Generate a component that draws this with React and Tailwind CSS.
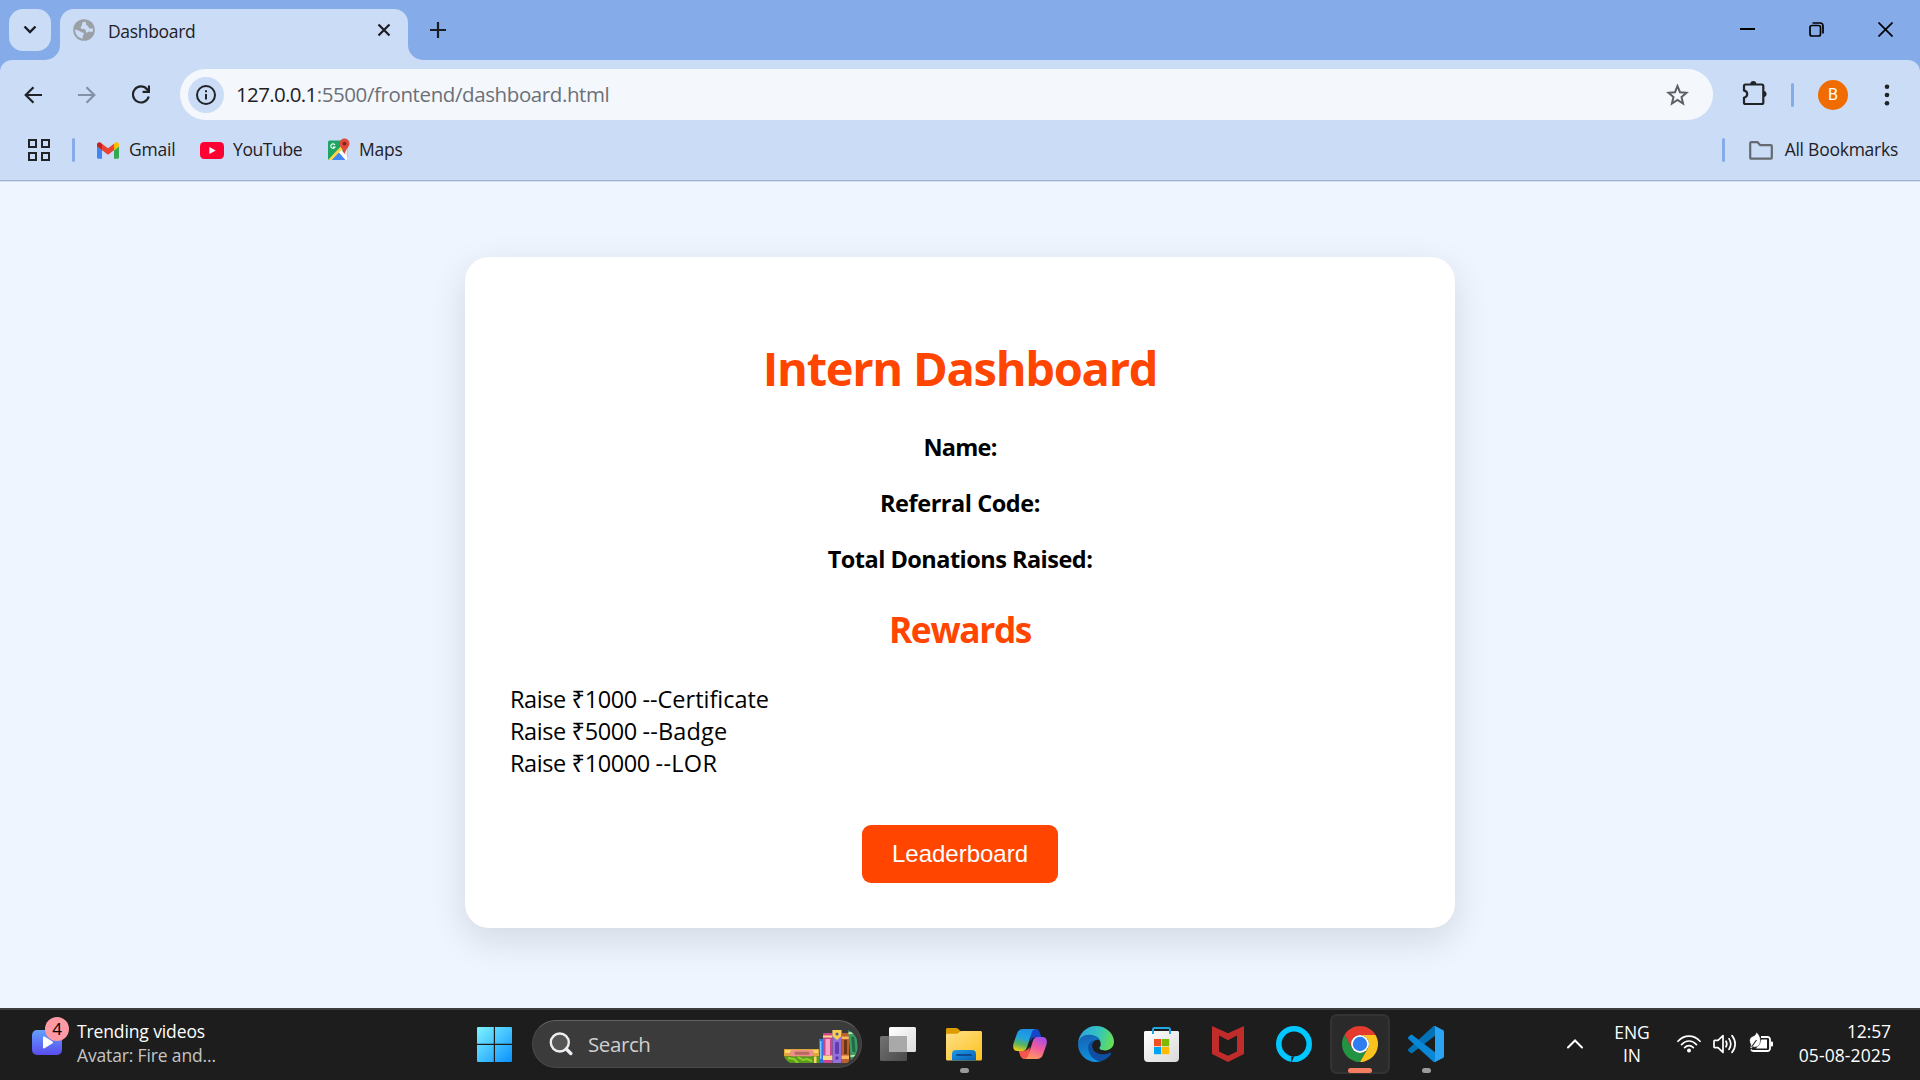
import React from 'react';

/* ---------- browser icons ---------- */

const Globe = () => (
  <svg width="22" height="22" viewBox="0 0 22 22">
    <circle cx="11" cy="11" r="10.8" fill="#9aa0a6" />
    <path d="M12.5 2.6C9.5 3 8.6 4.4 8.9 5.8c.3 1.3-1.4 1.5-1.2 3 .1 1 1 1.2 2.3 1.1 1.6-.1 2.6.4 2.8 1.6.2 1-.3 1.7.5 2.1 1 .4 1.4-1 2.7-1.1 1.3 0 2.6.7 3.5.2.5-.9.5-2.7.2-3.7-1 .6-2.4.8-3.4.2-1-.7-.6-1.9-1.7-2.4-.9-.4-1.700-.8-1.500-2.100z" fill="#cbdcf6" />
    <path d="M2 10.600c1 .200 4.400 1.300 5.600 2.200 1.200 1 2.700.500 3.200 1.700.500 1.300-.900 1.600-1.100 2.900-.1 1 .1 1.700.2 2.300C5.500 19.200 2 15.500 2 10.600z" fill="#cbdcf6" />
  </svg>
);

const Gmail = () => (
  <svg width="22" height="17" viewBox="52 42 88 66">
    <path fill="#4285f4" d="M58 108h14V74L52 59v43c0 3.320 2.690 6 6 6" />
    <path fill="#34a853" d="M120 108h14c3.320 0 6-2.690 6-6V59l-20 15" />
    <path fill="#fbbc04" d="M120 48v26l20-15v-8c0-7.420-8.470-11.650-14.400-7.200" />
    <path fill="#ea4335" d="M72 74V48l24 18 24-18v26L96 92" />
    <path fill="#c5221f" d="M52 51v8l20 15V48l-5.600-4.200c-5.940-4.450-14.400-.220-14.400 7.200" />
  </svg>
);

const YouTube = () => (
  <svg width="24" height="17" viewBox="0 0 24 17">
    <rect width="24" height="17" rx="4.200" fill="#ff0033" />
    <path d="M9.400 5v7l6.300-3.500z" fill="#fff" />
  </svg>
);

const Maps = () => (
  <svg width="22" height="23" viewBox="0 0 22 23">
    <clipPath id="mapTile"><rect x="0" y="2.500" width="19.500" height="19.500" rx="1.500" /></clipPath>
    <g clipPath="url(#mapTile)">
      <rect y="2" width="20" height="21" fill="#1fa463" />
      <path d="M20 8v14H12z" fill="#e8eaed" />
      <path d="M0 22L16 5l2 4L3 23z" fill="#fdd649" />
      <path d="M3 23l8-8.500L18.500 23z" fill="#4285f4" />
      <path d="M11 14.500l2.500-2.600L20 20v3h-1.500z" fill="#fff" />
    </g>
    <path d="M6.900 6.900a2.200 2.200 0 1 0 .1 2.200H4.900" fill="none" stroke="#fff" strokeWidth="1.100" />
    <path d="M16.500 0.500a5 5 0 0 1 5 5c0 3.500-4 5.500-5 11-1-5.500-5-7.500-5-11a5 5 0 0 1 5-5z" fill="#dd4b3e" />
    <circle cx="16.500" cy="5.600" r="1.900" fill="#7a241c" />
  </svg>
);

const Puzzle = () => (
  <svg width="26" height="26" viewBox="0 0 26 26" fill="none">
    <path d="M3.500 4.500h16.300c.900 0 1.500.600 1.500 1.500v16.500c0 .900-.600 1.500-1.500 1.500H3.500c-.900 0-1.500-.600-1.500-1.500v-4.700c2.200-.600 3.200-2 3.200-3.700S4.200 11 2 10.400V6c0-.900.600-1.500 1.500-1.500z" stroke="#202327" strokeWidth="2.200" />
    <path d="M8.300 4a3 3 0 0 1 6 0z" fill="#202327" />
    <path d="M21.500 11a3 3 0 0 1 0 6z" fill="#202327" />
  </svg>
);

const Divider = ({ className = '' }) => (
  <div className={`h-6 w-[3px] rounded-full bg-[#85ace9] ${className}`} />
);

/* ---------- taskbar icons ---------- */

const Start = () => (
  <svg width="35" height="35" viewBox="0 0 35 35">
    <defs>
      <linearGradient id="winG" x1="0" y1="0" x2="35" y2="35" gradientUnits="userSpaceOnUse">
        <stop stopColor="#7df3ff" /><stop offset=".5" stopColor="#45c3ff" /><stop offset="1" stopColor="#0a90fb" />
      </linearGradient>
    </defs>
    <path fill="url(#winG)" d="M1 0h15.800v16.800H0V1a1 1 0 0 1 1-1zM18 0h16a1 1 0 0 1 1 1v15.800H18zM0 18h16.800v17H1a1 1 0 0 1-1-1zM18 18h17v16a1 1 0 0 1-1 1H18z" />
  </svg>
);

const Books = () => (
  <svg width="75" height="33" viewBox="0 0 75 33">
    <clipPath id="pillEnd"><path d="M0 19h30V0h34c6 3 10 8 10 15s-4 14-11 18H6C3 31 1 29 0 26z" /></clipPath>
    <g clipPath="url(#pillEnd)">
      <rect x="0" y="19" width="35" height="7.500" fill="#dfa63a" />
      <rect x="1" y="20" width="33" height="3" fill="#fbd46b" />
      <rect x="6" y="20" width="24" height="6.500" rx="3" fill="#f08f8a" />
      <rect x="10.500" y="21.700" width="15" height="3" rx="1.500" fill="#b5695f" />
      <rect x="0" y="26.500" width="35" height="6.500" fill="#5c9c1d" />
      <path d="M4 28l6 1 4 4M14 27l5 3 4-1 5 2" stroke="#8ed12f" strokeWidth="2" fill="none" />
      <rect x="30" y="26.500" width="2.500" height="6.500" fill="#fbd46b" />
      <rect x="35" y="9" width="4" height="24" fill="#2f74dc" />
      <rect x="36" y="11" width="1.500" height="18" fill="#7fc0ff" />
      <rect x="39" y="3" width="9.500" height="30" rx="1" fill="#c9478a" />
      <rect x="41.500" y="9" width="4.500" height="16" fill="#f7a5cb" />
      <path d="M39 5.500h9.500v2H39zM39 25.500h9.500v4.500H39z" fill="#fbd98a" />
      <rect x="48.500" y="0" width="9" height="33" rx="1" fill="#9370dc" />
      <path d="M48.500 0h9v6L53 10l-4.500-4z" fill="#f8cf4f" />
      <rect x="51" y="12" width="4" height="12" rx="1" fill="#5f3fae" />
      <circle cx="53" cy="4" r="1.600" fill="#5b5a8c" />
      <circle cx="53" cy="28" r="1.700" fill="#5a3aa6" />
      <rect x="57.500" y="3" width="7.500" height="30" rx="1" fill="#b9602c" />
      <rect x="60" y="10" width="3" height="14" fill="#6f3413" />
      <path d="M57.500 6.500H65v2.500h-7.500zM57.500 25.500H65V29h-7.500z" fill="#fbb55f" />
      <g transform="rotate(-5 69 16)">
        <rect x="65.500" y="-1" width="8" height="32" rx="1" fill="#3d9a68" />
        <rect x="68" y="7" width="3" height="15" fill="#1f6b44" />
        <path d="M65.500 2h8v1.800h-8zM65.500 25h8v1.800h-8z" fill="#bfe3a0" />
      </g>
    </g>
  </svg>
);

const TaskView = () => (
  <svg width="36" height="36" viewBox="0 0 36 36">
    <defs>
      <linearGradient id="tvF" x1="0" y1="0" x2="1" y2="1"><stop stopColor="#fff" /><stop offset="1" stopColor="#dcdcdc" /></linearGradient>
      <linearGradient id="tvB" x1="0" y1="0" x2="1" y2="1"><stop stopColor="#737373" /><stop offset="1" stopColor="#4b4b4b" /></linearGradient>
    </defs>
    <rect x="0" y="10" width="27" height="25" rx="1.500" fill="url(#tvB)" />
    <rect x="9" y="1" width="27" height="25" rx="1.500" fill="url(#tvF)" />
    <path d="M9 10h18v16H10.500A1.500 1.500 0 0 1 9 24.500z" fill="#a9a9a9" />
  </svg>
);

const Explorer = () => (
  <svg width="36" height="36" viewBox="0 0 36 36">
    <defs>
      <linearGradient id="exY" x1="0" y1="0" x2="1" y2="1"><stop stopColor="#ffe08a" /><stop offset="1" stopColor="#fcc21f" /></linearGradient>
      <linearGradient id="exB" x1="0" y1="0" x2="1" y2="1"><stop stopColor="#1f9be6" /><stop offset="1" stopColor="#0a5fb4" /></linearGradient>
    </defs>
    <path d="M0 3.500C0 2.500.7 2 1.500 2H10c1 0 1.700.3 2.300.9L15 5.500V12H0z" fill="#dd9c00" />
    <path d="M0 9c0-.8.600-1.300 1.400-1.300h9.300c.8 0 1.400-.3 2-.9l1.500-1.200c.4-.4.900-.6 1.500-.6H34.500c.9 0 1.500.6 1.500 1.500v26.500c0 .9-.6 1.500-1.500 1.500h-33C.6 34.500 0 33.900 0 33z" fill="url(#exY)" />
    <path d="M6 34.500V28a4 4 0 0 1 4-4h16a4 4 0 0 1 4 4v6.500z" fill="url(#exB)" />
    <path d="M11 29h14" stroke="#0b4a91" strokeWidth="1.800" strokeLinecap="round" />
  </svg>
);

const Copilot = () => (
  <svg width="34" height="30" viewBox="0 0 34 30">
    <defs>
      <linearGradient id="cpL" x1="12" y1="0" x2="6" y2="22" gradientUnits="userSpaceOnUse">
        <stop stopColor="#1b8fe8" /><stop offset=".4" stopColor="#22a3e0" /><stop offset=".7" stopColor="#57b560" /><stop offset="1" stopColor="#f2cd17" />
      </linearGradient>
      <linearGradient id="cpR" x1="27" y1="8" x2="18" y2="30" gradientUnits="userSpaceOnUse">
        <stop stopColor="#a64fe8" /><stop offset=".45" stopColor="#ee5aa0" /><stop offset="1" stopColor="#ff9a5c" />
      </linearGradient>
    </defs>
    <path d="M17 0h5.500c2.500 0 3.700 1.700 4.500 4l1.400 4.300H23c-3 0-4.500 1.500-5.500 4.200z" fill="#1746c8" />
    <path d="M17 30h-5.500c-2.500 0-3.700-1.700-4.500-4l-1.400-4.300H11c3 0 4.500-1.500 5.500-4.200z" fill="#f4564e" />
    <path d="M10 0h13c-2.500 0-3.700 1.800-4.500 4.300l-4.300 13.400c-.9 2.700-2.200 4.300-4.700 4.300H4.500C.5 22-.5 18.500.5 14.500L4 4.500C5 1.600 7 0 10 0z" fill="url(#cpL)" />
    <path d="M24 30H11c2.500 0 3.700-1.800 4.500-4.300l4.300-13.400c.9-2.700 2.200-4.300 4.700-4.300h5c4 0 5 3.500 4 7.500l-3.500 10C29 28.400 27 30 24 30z" fill="url(#cpR)" />
  </svg>
);

const Edge = () => (
  <svg width="36" height="36" viewBox="0 0 36 36">
    <defs>
      <linearGradient id="edT" x1="3" y1="8" x2="35" y2="18" gradientUnits="userSpaceOnUse">
        <stop stopColor="#2fa8df" /><stop offset=".5" stopColor="#34c5bd" /><stop offset="1" stopColor="#69e04f" />
      </linearGradient>
      <linearGradient id="edB" x1="8" y1="9" x2="14" y2="36" gradientUnits="userSpaceOnUse">
        <stop stopColor="#1464b4" /><stop offset="1" stopColor="#1193e0" />
      </linearGradient>
    </defs>
    <path d="M0 18C.5 7.500 8.500 0 18 0c10.500 0 18 8 18 15.500 0 5.500-4 9-9 9-3.800 0-6.200-1.400-5.500-2.900 1-1 1.300-2.300 1.200-4C22.400 12.500 17 9 11 9 5 9 1 13 0 18z" fill="url(#edT)" />
    <path d="M0 18c1-6 5.500-9.200 11-9.200 5.500 0 9.500 2.200 11.200 5.700-4-2-8.200.5-8.200 5.500 0 6 5.500 11 13.500 11.500C25 34.500 21.500 36 18 36 8 36 0 28 0 18z" fill="url(#edB)" />
    <path d="M10.200 22c.3 6.500 5 12 11.800 13.500 5-1 9-4.200 11-7.500.5-1-.4-1.700-1.200-1.300C24 30.300 14.500 27.500 14 20c0-2.500 1-4.500 2.800-5.700-4 .3-6.800 3.700-6.600 7.700z" fill="#0f4fa3" />
  </svg>
);

const Store = () => (
  <svg width="36" height="36" viewBox="0 0 36 36">
    <defs><linearGradient id="stW" x1="0" y1="0" x2="1" y2="1"><stop stopColor="#fff" /><stop offset="1" stopColor="#d9d9d9" /></linearGradient></defs>
    <path d="M0 6.500C0 5.600.6 5 1.500 5h32c.9 0 1.500.6 1.500 1.500V32a4 4 0 0 1-4 4H4a4 4 0 0 1-4-4z" fill="url(#stW)" />
    <path d="M9 8V3.500C9 2.600 9.600 2 10.500 2h14c.9 0 1.500.6 1.500 1.500V8" fill="none" stroke="#21a7e6" strokeWidth="2" />
    <rect x="10" y="13" width="7.200" height="7.200" fill="#f25022" />
    <rect x="18" y="13" width="7.200" height="7.200" fill="#7fba00" />
    <rect x="10" y="21" width="7.200" height="7.200" fill="#00a4ef" />
    <rect x="18" y="21" width="7.200" height="7.200" fill="#ffb900" />
  </svg>
);

const McAfee = () => (
  <svg width="32" height="36" viewBox="0 0 32 36">
    <path fillRule="evenodd" fill="#c02c2a" d="M0 0l16 7.300L32 0v28l-16 8-16-8zM7 9.500V25.500l9 4.200 9-4.200V9.500l-9 4.700z" />
  </svg>
);

const Alexa = () => (
  <svg width="36" height="36" viewBox="0 0 36 36">
    <circle cx="18" cy="18" r="15.200" fill="none" stroke="#00c7ff" strokeWidth="5.600" />
    <path d="M15.300 30.500h3c-1.200 1.500-1.800 3.500-2 5.700h-1z" fill="#1d1d1d" />
    <path d="M16.300 36c.4-2.200 1.300-4 3-5.500l3-.4.500 5.200c-2 .6-4.500.8-6.500.7z" fill="#00c7ff" />
  </svg>
);

const Chrome = () => (
  <svg width="36" height="36" viewBox="0 0 48 48">
    <path fill="#e33b2e" d="M24 12h20.780A24 24 0 0 0 3.220 12L13.600 30A12 12 0 0 1 24 12z" />
    <path fill="#229342" d="M13.600 30L3.220 12A24 24 0 0 0 24 48l10.390-18A12 12 0 0 1 13.600 30z" />
    <path fill="#fcc31e" d="M34.390 30L24 48a24 24 0 0 0 20.780-36H24a12 12 0 0 1 10.390 18z" />
    <circle cx="24" cy="24" r="12" fill="#fff" />
    <circle cx="24" cy="24" r="9.600" fill="#2f7df0" />
  </svg>
);

const VSCode = () => (
  <svg width="36" height="36" viewBox="0 0 100 100">
    <path fill="#0072b8" d="M96.460 10.800 75.860.88C73.470-.27 70.620.21 68.750 2.080L1.300 63.580c-1.820 1.660-1.810 4.510.01 6.160l5.510 5.010c1.480 1.350 3.710 1.450 5.320.23L93.360 13.360C96.090 11.300 100 13.240 100 16.670v-.24c0-2.400-1.380-4.590-3.540-5.630Z" />
    <path fill="#0a86d6" d="M96.460 89.200 75.860 99.120c-2.390 1.150-5.240.67-7.110-1.200L1.300 36.420c-1.820-1.660-1.810-4.510.01-6.160l5.510-5.010c1.480-1.350 3.720-1.450 5.320-.23l81.220 61.620c2.730 2.070 6.640.13 6.640-3.300v.24c0 2.410-1.380 4.590-3.540 5.630Z" />
    <path fill="#2aa3f2" d="M75.860 99.130c-2.390 1.150-5.240.66-7.110-1.200 2.310 2.310 6.250.67 6.250-2.590V4.660c0-3.260-3.940-4.900-6.250-2.590 1.870-1.870 4.720-2.360 7.110-1.210l20.600 9.910c2.160 1.040 3.540 3.230 3.540 5.630v67.190c0 2.400-1.380 4.590-3.540 5.630Z" />
  </svg>
);

const Wifi = () => (
  <svg width="24" height="18" viewBox="0 0 24 18" fill="none" stroke="#fff" strokeWidth="1.700" strokeLinecap="round">
    <path d="M1 6.300C4 3 7.800 1.200 12 1.200S20 3 23 6.300" />
    <path d="M4.500 9.600C6.600 7.300 9.100 6 12 6s5.400 1.300 7.500 3.600" />
    <path d="M7.600 12.600c1.300-1.300 2.700-2 4.400-2s3.100.7 4.400 2" />
    <circle cx="12" cy="15.500" r="2" fill="#fff" stroke="none" />
  </svg>
);

const Speaker = () => (
  <svg width="24" height="20" viewBox="0 0 24 20" fill="none" stroke="#fff" strokeWidth="1.700" strokeLinecap="round" strokeLinejoin="round">
    <path d="M1 7.200c0-.5.300-.8.800-.8H5l5-4.800v16.800l-5-4.800H1.800c-.5 0-.8-.3-.8-.8z" />
    <path d="M13 7.200c1 1.700 1 3.900 0 5.600" />
    <path d="M16 4.600c2.200 3.300 2.200 7.500 0 10.800" />
    <path d="M19 1.600c4.200 5.100 4.200 11.700 0 16.800" />
  </svg>
);

const Battery = () => (
  <svg width="24" height="22" viewBox="0 0 24 22">
    <path d="M12 5h6.500a2.500 2.500 0 0 1 2.500 2.500v9a2.500 2.500 0 0 1-2.500 2.500H4.500A2.500 2.500 0 0 1 2 17.500" fill="none" stroke="#fff" strokeWidth="1.800" />
    <path d="M12.500 7.500H18v9H7z" fill="#fff" />
    <rect x="21.500" y="9.500" width="2.500" height="5" rx="1" fill="#fff" />
    <path d="M7.500 0c2 2.500 4 4.500 4 8.500 0 3.500-2 6-4.500 6.500-1.500.3-2.500 0-3-.2L2.500 16.500 1 15.500 2 13C-.5 9 .5 5 4.500 4 6 3.600 7 2 7.500 0z" fill="#fff" stroke="#1d1d1d" strokeWidth=".5" />
    <path d="M2.500 15L7.500 8" stroke="#1d1d1d" strokeWidth="1.100" />
  </svg>
);

const apps = [
  { name: 'taskview', Icon: TaskView },
  { name: 'explorer', Icon: Explorer, open: true },
  { name: 'copilot', Icon: Copilot },
  { name: 'edge', Icon: Edge },
  { name: 'store', Icon: Store },
  { name: 'mcafee', Icon: McAfee },
  { name: 'alexa', Icon: Alexa },
  { name: 'chrome', Icon: Chrome, active: true },
  { name: 'vscode', Icon: VSCode, open: true },
];

/* ---------- sections ---------- */

function TabStrip() {
  return (
    <div className="flex h-[60px] items-stretch">
      <div className="ml-[9px] mt-[9px] flex h-[42px] w-[42px] items-center justify-center rounded-[14px] bg-[#cbdcf6]">
        <svg width="14" height="10" viewBox="0 0 14 10" fill="none" stroke="#1b1d21" strokeWidth="2.400">
          <path d="M1.500 1.500L7 7l5.500-5.500" />
        </svg>
      </div>
      <svg className="-ml-[6px] self-end" width="15" height="15" viewBox="0 0 15 15"><path d="M15 0v15H0A15 15 0 0 0 15 0z" fill="#cbdcf6" /></svg>
      <div className="mt-[9px] flex w-[348px] items-start rounded-t-[14px] bg-[#cbdcf6] pl-[13px] pr-[17px]">
        <div className="mt-[10px]"><Globe /></div>
        <span className="ml-[13px] mt-[10px] grow text-[17.5px] leading-6 tracking-[-0.33px] text-[#1f2125]">Dashboard</span>
        <svg className="mt-[14px]" width="14" height="14" viewBox="0 0 14 14" stroke="#1b1d21" strokeWidth="2.200"><path d="M1.500 1.500l11 11M12.500 1.500l-11 11" /></svg>
      </div>
      <svg className="self-end" width="15" height="15" viewBox="0 0 15 15"><path d="M0 0v15h15A15 15 0 0 1 0 0z" fill="#cbdcf6" /></svg>
      <svg className="ml-[7px] mt-[22px]" width="16" height="16" viewBox="0 0 16 16" stroke="#1b1d21" strokeWidth="2.200"><path d="M8 0v16M0 8h16" /></svg>
      <div className="ml-auto mr-[27px] mt-[22px] flex h-4 items-start gap-[54px]">
        <svg width="15" height="15" viewBox="0 0 15 15"><path d="M0 7h15" stroke="#000" strokeWidth="2" /></svg>
        <svg width="15" height="15" viewBox="0 0 15 15" fill="none" stroke="#000" strokeWidth="1.700">
          <rect x="1" y="3.500" width="10.500" height="10.500" rx="2" />
          <path d="M3.500 1H11a3 3 0 0 1 3 3v7.500" />
        </svg>
        <svg width="15" height="15" viewBox="0 0 15 15" stroke="#000" strokeWidth="1.700"><path d="M.5.5l14 14M14.500.5l-14 14" /></svg>
      </div>
    </div>
  );
}

function Toolbar() {
  return (
    <div className="flex h-[69px] items-center">
      <svg className="ml-[24px]" width="18" height="18" viewBox="0 0 18 18" fill="none" stroke="#202327" strokeWidth="2.200"><path d="M18 9H2M9.500 1.200L1.700 9l7.800 7.800" /></svg>
      <svg className="ml-[36px]" width="18" height="18" viewBox="0 0 18 18" fill="none" stroke="#8490a5" strokeWidth="2.200"><path d="M0 9h16M8.500 1.200L16.300 9l-7.800 7.800" /></svg>
      <svg className="ml-[36px]" width="18" height="19" viewBox="0 0 18 19" fill="none" stroke="#202327" strokeWidth="2.200">
        <path d="M16.700 11.500A8 8 0 1 1 15 4.200l1.800 2" />
        <path d="M17 .5v6.400h-6.400" />
      </svg>
      <div className="ml-[30px] flex h-[51px] w-[1533px] items-center rounded-full bg-[#f4f8fd] pl-[8px] pr-[24px]">
        <div className="flex h-9 w-9 items-center justify-center rounded-full bg-[#cbdcf6]">
          <svg width="20" height="20" viewBox="0 0 20 20" fill="none" stroke="#202327"><circle cx="10" cy="10" r="9" strokeWidth="2" /><path d="M10 9v5.500M10 5.300v2" strokeWidth="2" /></svg>
        </div>
        <span className="-mt-px ml-[12px] grow text-[20.5px] leading-8 text-[#1f2125]">
          <span className="tracking-[-0.65px]">127.0.0.1</span><span className="tracking-[-0.4px] text-[#6b7077]">:5500/frontend/dashboard.html</span>
        </span>
        <svg width="23" height="22" viewBox="0 0 23 22" fill="none" stroke="#5c6066" strokeWidth="2"><path d="M11.500 2l2.500 6.200 6.500.5-5 4.300 1.600 6.500-5.600-3.500-5.600 3.500L7.500 13l-5-4.300 6.500-.5z" /></svg>
      </div>
      <div className="-mt-[3px] ml-[29px]"><Puzzle /></div>
      <Divider className="ml-[23px]" />
      <div className="ml-[24px] flex h-[30px] w-[30px] items-center justify-center rounded-full bg-[#f06c00] pt-px font-['Roboto',sans-serif] text-[16px] text-white">B</div>
      <svg className="ml-[36px]" width="6" height="22" viewBox="0 0 6 22" fill="#202327"><circle cx="3" cy="2.800" r="2.300" /><circle cx="3" cy="11" r="2.300" /><circle cx="3" cy="19.200" r="2.300" /></svg>
    </div>
  );
}

function Bookmarks() {
  return (
    <div className="flex h-[52px] items-start border-b border-[#a1b0cd] pt-[9px] text-[17.5px] text-[#1f2125]">
      <div className="flex h-6 w-full items-center">
        <svg className="ml-[28px]" width="22" height="22" viewBox="0 0 22 22" fill="none" stroke="#202327" strokeWidth="2"><path d="M1 1h7v7H1zM14 1h7v7h-7zM1 14h7v7H1zM14 14h7v7h-7z" /></svg>
        <Divider className="ml-[22px]" />
        <div className="ml-[22px]"><Gmail /></div>
        <span className="-mt-[2px] ml-[10px] w-[46px] tracking-[-0.2px]">Gmail</span>
        <div className="ml-[25px]"><YouTube /></div>
        <span className="-mt-[2px] ml-[9px] w-[68px] tracking-[-0.4px]">YouTube</span>
        <div className="-mt-px ml-[27px]"><Maps /></div>
        <span className="-mt-[2px] ml-[9px] tracking-[-0.2px]">Maps</span>
        <Divider className="ml-auto" />
        <svg className="ml-[24px]" width="24" height="19" viewBox="0 0 24 19" fill="none" stroke="#666a70" strokeWidth="2.200"><path d="M2.200 1.200h6.300l2.700 3h10.600c.6 0 1 .4 1 1v11.500c0 .6-.4 1-1 1H2.200c-.6 0-1-.4-1-1V2.200c0-.6.400-1 1-1z" /></svg>
        <span className="-mt-[2px] ml-[12px] mr-[22px] tracking-[-0.25px]">All Bookmarks</span>
      </div>
    </div>
  );
}

function InternCard() {
  return (
    <div className="mt-[75px] flex h-[671px] w-[990px] flex-col items-center rounded-[24px] bg-white px-[45px] pt-[79px] text-[23.5px] leading-8 text-black shadow-[0_12px_36px_rgba(0,20,20,0.12)]">
      <h1 className="text-[47px] font-bold leading-[64px] tracking-[-1.27px] text-[#ff4500]">Intern Dashboard</h1>
      <div className="mt-[31px] flex flex-col items-center gap-6 font-bold">
        <p className="tracking-[-0.75px]">Name:</p>
        <p className="tracking-[-0.45px]">Referral Code:</p>
        <p className="tracking-[-0.52px]">Total Donations Raised:</p>
      </div>
      <h2 className="mt-[30px] text-[35.3px] font-bold leading-[48px] tracking-[-1.35px] text-[#ff4500]">Rewards</h2>
      <ul className="mt-[30px] w-full">
        <li><span className="tracking-[-0.4px]">Raise ₹1000 </span><span className="tracking-[-0.02px]">--Certificate</span></li>
        <li><span className="tracking-[-0.4px]">Raise ₹5000 </span><span className="tracking-[0.15px]">--Badge</span></li>
        <li><span className="tracking-[-0.4px]">Raise ₹10000 </span><span className="tracking-[0.3px]">--LOR</span></li>
      </ul>
      <button className="mt-[46px] h-[58px] w-[196px] rounded-[9px] bg-[#ff4500] font-['Liberation_Sans',Arial,sans-serif] text-[24px] text-white">Leaderboard</button>
    </div>
  );
}

function Taskbar() {
  return (
    <div className="flex h-[72px] items-center border-t-2 border-[#3d3d40] bg-[#1d1d1d] text-[17.5px] leading-6 text-white">
      <div className="relative ml-[32px] h-[48px] w-[37px]">
        <svg className="absolute left-0 top-[9px]" width="30" height="25" viewBox="0 0 30 25">
          <defs><linearGradient id="vidG" x1="0" y1="0" x2="0" y2="1"><stop stopColor="#62a0fb" /><stop offset="1" stopColor="#5a4cf0" /></linearGradient></defs>
          <rect width="30" height="25" rx="5" fill="url(#vidG)" />
          <path d="M11 7.500c0-.9.800-1.300 1.500-.9l8 5c.7.400.7 1.300 0 1.700l-8 5c-.7.400-1.500 0-1.500-.9z" fill="#fff" />
        </svg>
        <div className="absolute -top-[4px] left-[13px] flex h-6 w-6 items-center justify-center rounded-full bg-[#ff99a4] text-[17px] text-black">4</div>
      </div>
      <div className="-mt-[5px] ml-[8px] w-[385px]">
        <div className="tracking-[-0.12px]">Trending videos</div>
        <div className="tracking-[-0.15px] text-[#c5c5c5]">Avatar: Fire and...</div>
      </div>
      <div className="ml-[15px] -mt-[2px]"><Start /></div>
      <div className="-mt-[2px] ml-[20px] flex h-12 w-[330px] items-center overflow-hidden rounded-full border-[1.5px] border-[#4a4a4a] border-t-[#626262] bg-[#3b3b3b] pl-[16px] pr-[2px]">
        <svg width="24" height="24" viewBox="0 0 24 24" fill="none" stroke="#eeeef2"><circle cx="10.800" cy="10.500" r="9" strokeWidth="2.400" fill="#565656" /><path d="M17.300 17l4.500 4.500" strokeWidth="3.400" strokeLinecap="round" /></svg>
        <span className="ml-[15px] text-[20.5px] tracking-[-0.4px] text-[#cfcfcf]">Search</span>
        <div className="ml-auto mt-[5px]"><Books /></div>
      </div>
      <div className="ml-[3px] flex">
        {apps.map(({ name, Icon, open, active }) => (
          <div key={name} className="-mt-[2px] flex h-[60px] w-[66px] justify-center">
            <div className={`relative flex h-[60px] w-[60px] items-center justify-center rounded-[7px] ${active ? 'border-2 border-[#333333] bg-[#2a2a2a]' : ''}`}>
              <Icon />
              {open && <div className="absolute bottom-[1px] h-[5px] w-[9px] rounded-full bg-[#9a9a9a]" />}
              {active && <div className="absolute -bottom-[1px] h-[5px] w-6 rounded-full bg-[#f67c62]" />}
            </div>
          </div>
        ))}
      </div>
      <div className="-mt-[2px] ml-auto mr-[29px] flex items-center">
        <svg width="16" height="10" viewBox="0 0 16 10" fill="none" stroke="#fff" strokeWidth="2" strokeLinecap="round"><path d="M1 8.500L8 1.500l7 7" /></svg>
        <div className="ml-[29px] w-10 text-center leading-[23px]"><div>ENG</div><div>IN</div></div>
        <div className="ml-[25px]"><Wifi /></div>
        <div className="ml-[12px]"><Speaker /></div>
        <div className="-mt-[3px] ml-[12px]"><Battery /></div>
        <div className="-mt-[2px] ml-[21px] w-[97px] text-right"><div className="tracking-[-0.1px]">12:57</div><div className="tracking-[0.1px]">05-08-2025</div></div>
      </div>
    </div>
  );
}

export default function App() {
  return (
    <div className="flex h-[1080px] w-[1920px] flex-col overflow-hidden font-['Open_Sans','Noto_Sans',sans-serif]">
      <header className="bg-[#85ace9]">
        <TabStrip />
        <div className="rounded-t-[12px] border-b border-[#cfdff4] bg-[#cbdcf6]">
          <Toolbar />
          <Bookmarks />
        </div>
      </header>
      <main className="flex grow flex-col items-center bg-[#eef5ff]">
        <InternCard />
      </main>
      <Taskbar />
    </div>
  );
}
